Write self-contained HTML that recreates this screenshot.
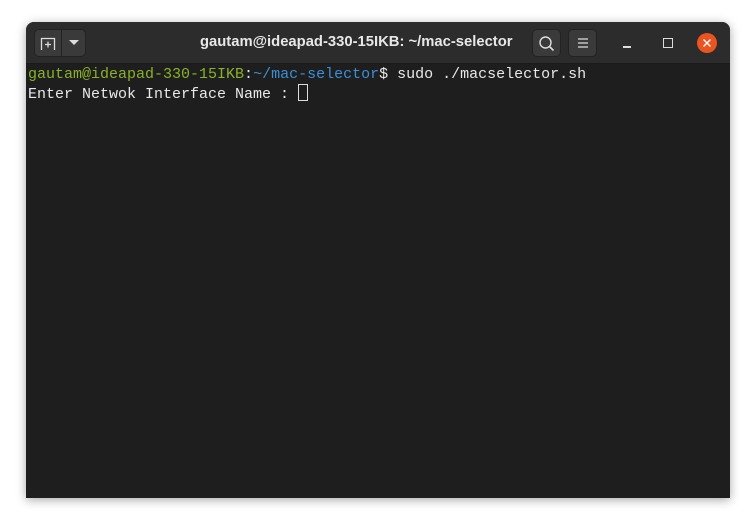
<!DOCTYPE html>
<html><head><style>
body{margin:0;width:756px;height:527px;background:#fff;position:relative;overflow:hidden;font-family:"Liberation Sans",sans-serif}
.win{position:absolute;left:26px;top:22px;width:704px;height:476px;background:#1e1e1e;border-radius:8px 8px 0 0;box-shadow:0 2px 10px rgba(0,0,0,.35);overflow:hidden}
.tb{position:absolute;left:0;top:0;width:704px;height:41px;background:#2c2c2c;border-bottom:1px solid #1a1a1a}
.btn{position:absolute;top:7px;height:28px;background:#3a3a3a;border:1px solid #222;border-radius:5px;box-sizing:border-box}
.title{position:absolute;left:174px;top:12px;color:#e8e8e8;font-weight:bold;font-size:14.8px;white-space:nowrap}
.term{position:absolute;left:2px;top:44px;font-family:"Liberation Mono",monospace;font-size:15px;line-height:18px;color:#e8e8e8;white-space:pre}
.g{color:#8ab226}.b{color:#3b8fd8}
.cur{display:inline-block;width:10px;height:17px;border:1px solid #ddd;box-sizing:border-box;vertical-align:-3px}
</style></head><body>
<div class="win">
<div class="tb">
 <div class="btn" style="left:8px;width:52px"></div>
 <div style="position:absolute;left:35px;top:8px;width:1px;height:26px;background:#222"></div>
 <svg style="position:absolute;left:14px;top:14px" width="16" height="16"><path d="M1.5 14V2.5H14.5V14M5 8.5H11M8 5.5V11.5" stroke="#ddd" stroke-width="1.3" fill="none"/></svg>
 <svg style="position:absolute;left:42px;top:17px" width="12" height="8"><path d="M1 1H11L6 6Z" fill="#ddd"/></svg>
 <div class="title">gautam@ideapad-330-15IKB: ~/mac-selector</div>
 <div class="btn" style="left:506px;width:29px"></div>
 <svg style="position:absolute;left:512px;top:13px" width="18" height="18"><circle cx="7.5" cy="7.5" r="5.5" stroke="#ddd" stroke-width="1.4" fill="none"/><path d="M11.5 11.5L15.5 15.5" stroke="#ddd" stroke-width="1.6"/></svg>
 <div class="btn" style="left:542px;width:29px"></div>
 <svg style="position:absolute;left:550px;top:14px" width="14" height="14"><path d="M2 3H12M2 7H12M2 11H12" stroke="#ddd" stroke-width="1.2"/></svg>
 <div style="position:absolute;left:597px;top:24px;width:8px;height:1.5px;background:#ddd"></div>
 <div style="position:absolute;left:637px;top:16px;width:8px;height:8px;border:1.3px solid #ddd"></div>
 <div style="position:absolute;left:671px;top:11px;width:20px;height:20px;border-radius:50%;background:#e95420"></div>
 <svg style="position:absolute;left:676px;top:16px" width="10" height="10"><path d="M1.5 1.5L8.5 8.5M8.5 1.5L1.5 8.5" stroke="#fff" stroke-width="1.4"/></svg>
</div>
<div class="term"><span class="g">gautam@ideapad-330-15IKB</span>:<span class="b">~/mac-selector</span>$ sudo ./macselector.sh
Enter Netwok Interface Name : <span class="cur"></span></div>
</div>
</body></html>
